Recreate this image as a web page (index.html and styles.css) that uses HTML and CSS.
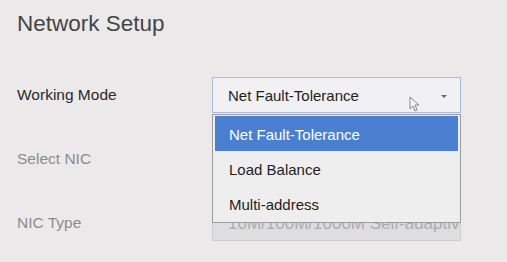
FILE: index.html
```html
<!DOCTYPE html>
<html>
<head>
<meta charset="utf-8">
<link rel="stylesheet" href="styles.css">
</head>
<body>
<div class="page">
  <h1 class="title">Network Setup</h1>
  <div class="form">
    <div class="row">
      <div class="label">Working Mode</div>
      <div class="field select">
        <span class="value">Net Fault-Tolerance</span>
        <span class="caret"></span>
      </div>
    </div>
    <div class="row">
      <div class="label muted">Select NIC</div>
      <div class="field disabled"><span class="value"></span></div>
    </div>
    <div class="row">
      <div class="label muted">NIC Type</div>
      <div class="field disabled"><span class="value">10M/100M/1000M Self-adaptive</span></div>
    </div>
  </div>
  <ul class="menu">
    <li class="item active">Net Fault-Tolerance</li>
    <li class="item">Load Balance</li>
    <li class="item">Multi-address</li>
  </ul>
  <svg class="cursor" width="10" height="16" viewBox="0 0 10 16">
    <path d="M1 1 L1 13 L4 10 L6 15 L8 14 L6 9 L10 9 Z" fill="#f4f4f4" stroke="#8a8a8a" stroke-width="1" stroke-linejoin="round"/>
  </svg>
</div>
</body>
</html>
```
FILE: styles.css
```css
html, body {
  margin: 0;
  padding: 0;
  background: #ebe9ea;
}
body {
  font-family: "Liberation Sans", Arial, sans-serif;
  width: 507px;
  height: 262px;
  overflow: hidden;
}
.page {
  position: relative;
  box-sizing: border-box;
  padding: 11px 17px 0;
  height: 262px;
}
.title {
  margin: 0;
  font-size: 22.5px;
  line-height: 26px;
  font-weight: normal;
  color: #454545;
}
.form {
  display: flex;
  flex-direction: column;
  gap: 28px;
  margin-top: 40px;
}
.row {
  display: flex;
  align-items: center;
  height: 36px;
}
.label {
  width: 195px;
  font-size: 15.5px;
  color: #2a2a2a;
}
.label.muted {
  color: #8c8c8c;
}
.field {
  box-sizing: border-box;
  width: 249px;
  height: 36px;
  display: flex;
  align-items: center;
  padding-left: 15px;
  font-size: 15px;
}
.select {
  border: 1px solid #a9bcd9;
  background: #f1f0f2;
  color: #1e1e1e;
  position: relative;
}
.caret {
  position: absolute;
  right: 13px;
  top: 17px;
  width: 0;
  height: 0;
  border-left: 3.5px solid transparent;
  border-right: 3.5px solid transparent;
  border-top: 3.5px solid #6a6a6a;
}
.disabled {
  border: 1px solid #cfcecf;
  background: #dedddf;
  color: #acacac;
  overflow: hidden;
  white-space: nowrap;
  font-size: 17px;
  padding-top: 2px;
}
.menu {
  position: absolute;
  left: 212px;
  top: 114px;
  box-sizing: border-box;
  width: 249px;
  margin: 0;
  padding: 1px 2px;
  list-style: none;
  border: 1px solid #9c9c9c;
  background: #efeeef;
}
.item {
  height: 35px;
  line-height: 37px;
  padding-left: 14px;
  font-size: 15px;
  color: #1e1e1e;
}
.item.active {
  background: #4a7fd0;
  color: #ffffff;
}
.cursor {
  position: absolute;
  left: 409px;
  top: 96px;
}
```
